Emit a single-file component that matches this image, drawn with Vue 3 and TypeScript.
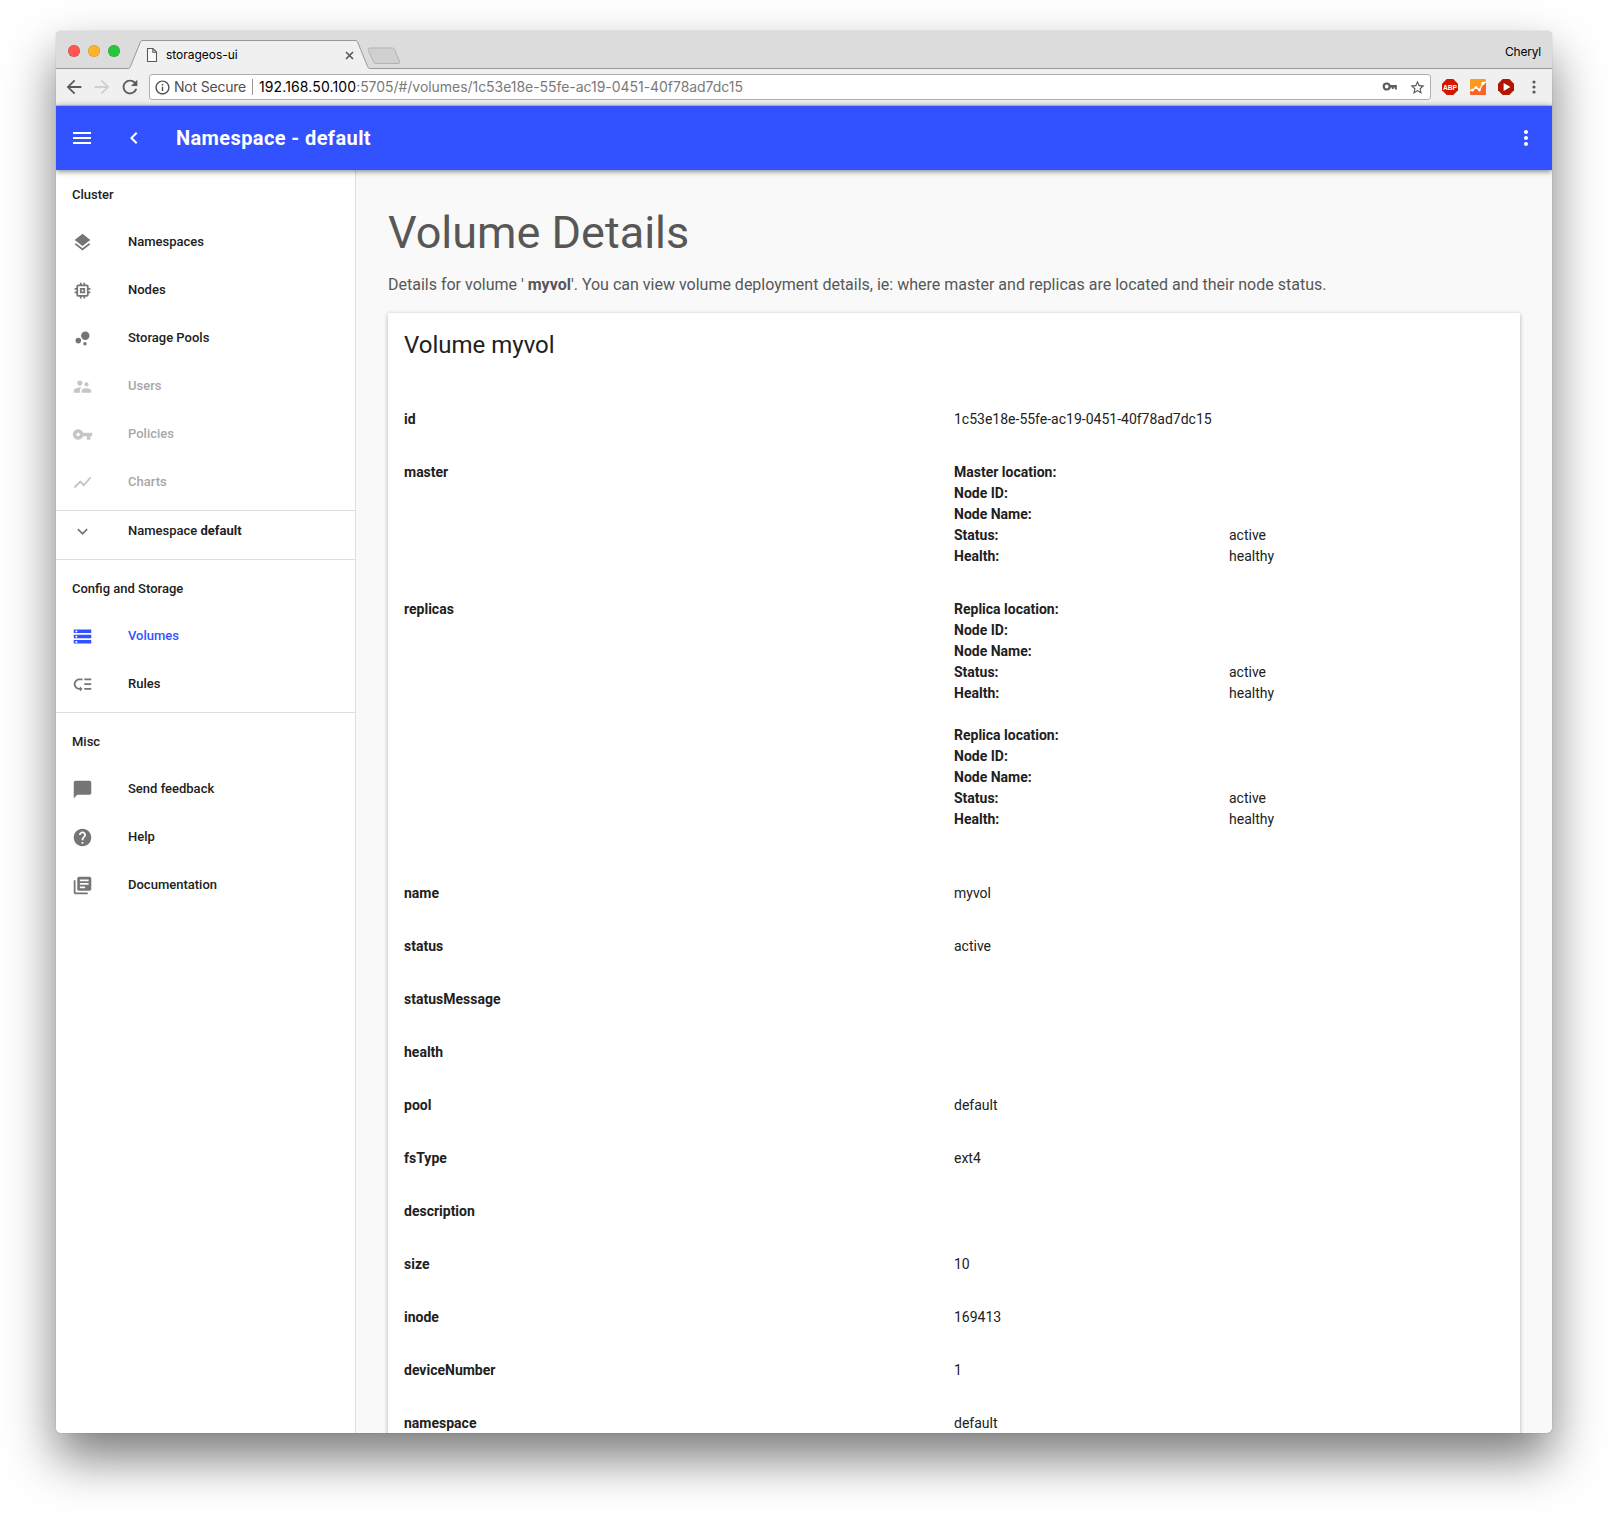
<script setup lang="ts">
interface NavItem {
  label: string
  icon: string
  disabled?: boolean
  active?: boolean
}

interface Placement {
  kind: string
  status: string
  health: string
}

interface Row {
  key: string
  value?: string
  placements?: Placement[]
  spaced?: boolean
}

const icons: Record<string, string> = {
  menu: 'M3 18h18v-2H3v2zm0-5h18v-2H3v2zm0-7v2h18V6H3z',
  back: 'M15.41 7.41L14 6l-6 6 6 6 1.41-1.41L10.83 12z',
  more: 'M12 8c1.1 0 2-.9 2-2s-.9-2-2-2-2 .9-2 2 .9 2 2 2zm0 2c-1.1 0-2 .9-2 2s.9 2 2 2 2-.9 2-2-.9-2-2-2zm0 6c-1.1 0-2 .9-2 2s.9 2 2 2 2-.9 2-2-.9-2-2-2z',
  layers: 'M11.99 18.54l-7.37-5.73L3 14.07l9 7 9-7-1.63-1.27-7.38 5.74zM12 16l7.36-5.73L21 9l-9-7-9 7 1.63 1.27L12 16z',
  memory: 'M15 9H9v6h6V9zm-2 4h-2v-2h2v2zm8-2V9h-2V7c0-1.1-.9-2-2-2h-2V3h-2v2h-2V3H9v2H7c-1.1 0-2 .9-2 2v2H3v2h2v2H3v2h2v2c0 1.1.9 2 2 2h2v2h2v-2h2v2h2v-2h2c1.1 0 2-.9 2-2v-2h2v-2h-2v-2h2zm-4 6H7V7h10v10z',
  bubbles: 'M4 14.4a3.2 3.2 0 1 0 6.4 0a3.2 3.2 0 1 0-6.4 0zM12.8 18a2 2 0 1 0 4 0a2 2 0 1 0-4 0zM10.4 8.8a4.8 4.8 0 1 0 9.6 0a4.8 4.8 0 1 0-9.6 0z',
  users: 'M16.5 12c1.38 0 2.49-1.12 2.49-2.5S17.88 7 16.5 7C15.12 7 14 8.12 14 9.5s1.12 2.5 2.5 2.5zM9 11c1.66 0 2.99-1.34 2.99-3S10.66 5 9 5C7.34 5 6 6.34 6 8s1.34 3 3 3zm7.5 3c-1.83 0-5.5.92-5.5 2.75V19h11v-2.25c0-1.83-3.67-2.75-5.5-2.75zM9 13c-2.33 0-7 1.17-7 3.5V19h7v-2.25c0-.85.33-2.34 2.37-3.47C10.5 13.1 9.66 13 9 13z',
  key: 'M12.65 10C11.83 7.67 9.61 6 7 6c-3.31 0-6 2.69-6 6s2.69 6 6 6c2.61 0 4.83-1.67 5.65-4H17v4h4v-4h2v-4H12.65zM7 14c-1.1 0-2-.9-2-2s.9-2 2-2 2 .9 2 2-.9 2-2 2z',
  chart: 'M3.5 18.49l6-6.01 4 4L22 6.92l-1.41-1.41-7.09 7.97-4-4L2 16.99z',
  expand: 'M16.59 8.59L12 13.17 7.41 8.59 6 10l6 6 6-6z',
  storage: 'M2 20h20v-4H2v4zm2-3h2v2H4v-2zM2 4v4h20V4H2zm4 3H4V5h2v2zm-4 7h20v-4H2v4zm2-3h2v2H4v-2z',
  rules: 'M14 5h8v2h-8zm0 5.5h8v2h-8zm0 5.5h8v2h-8zM2 11.5C2 15.08 4.92 18 8.5 18H9v2l3-3-3-3v2h-.5C6.02 16 4 13.98 4 11.5S6.02 7 8.5 7H12V5H8.5C4.92 5 2 7.92 2 11.5z',
  chat: 'M20 2H4c-1.1 0-2 .9-2 2v18l4-4h14c1.1 0 2-.9 2-2V4c0-1.1-.9-2-2-2z',
  help: 'M12 2C6.48 2 2 6.48 2 12s4.48 10 10 10 10-4.48 10-10S17.52 2 12 2zm1 17h-2v-2h2v2zm2.07-7.75l-.9.92C13.45 12.9 13 13.5 13 15h-2v-.5c0-1.1.45-2.1 1.17-2.83l1.24-1.26c.37-.36.59-.86.59-1.41 0-1.1-.9-2-2-2s-2 .9-2 2H8c0-2.21 1.79-4 4-4s4 1.79 4 4c0 .88-.36 1.68-.93 2.25z',
  books: 'M4 6H2v14c0 1.1.9 2 2 2h14v-2H4V6zm16-4H8c-1.1 0-2 .9-2 2v12c0 1.1.9 2 2 2h12c1.1 0 2-.9 2-2V4c0-1.1-.9-2-2-2zm-1 9H9V9h10v2zm-4 4H9v-2h6v2zm4-8H9V5h10v2z',
  arrowBack: 'M20 11H7.83l5.59-5.59L12 4l-8 8 8 8 1.41-1.41L7.83 13H20v-2z',
  arrowForward: 'M12 4l-1.41 1.41L16.17 11H4v2h12.17l-5.58 5.59L12 20l8-8z',
  reload: 'M17.65 6.35C16.2 4.9 14.21 4 12 4c-4.42 0-7.99 3.58-7.99 8s3.57 8 7.99 8c3.73 0 6.84-2.55 7.73-6h-2.08c-.82 2.33-3.04 4-5.65 4-3.31 0-6-2.69-6-6s2.69-6 6-6c1.66 0 3.14.69 4.22 1.78L13 11h7V4l-2.35 2.35z',
  info: 'M11 17h2v-6h-2v6zm1-15C6.48 2 2 6.48 2 12s4.48 10 10 10 10-4.48 10-10S17.52 2 12 2zm0 18c-4.41 0-8-3.59-8-8s3.59-8 8-8 8 3.59 8 8-3.59 8-8 8zM11 9h2V7h-2v2z',
  star: 'M22 9.24l-7.19-.62L12 2 9.19 8.63 2 9.24l5.46 4.73L5.82 21 12 17.27 18.18 21l-1.63-7.03L22 9.24zM12 15.4l-3.76 2.27 1-4.28-3.32-2.88 4.38-.38L12 6.1l1.71 4.04 4.38.38-3.32 2.88 1 4.28L12 15.4z',
}

const clusterItems: NavItem[] = [
  { label: 'Namespaces', icon: 'layers' },
  { label: 'Nodes', icon: 'memory' },
  { label: 'Storage Pools', icon: 'bubbles' },
  { label: 'Users', icon: 'users', disabled: true },
  { label: 'Policies', icon: 'key', disabled: true },
  { label: 'Charts', icon: 'chart', disabled: true },
]

const configItems: NavItem[] = [
  { label: 'Volumes', icon: 'storage', active: true },
  { label: 'Rules', icon: 'rules' },
]

const miscItems: NavItem[] = [
  { label: 'Send feedback', icon: 'chat' },
  { label: 'Help', icon: 'help' },
  { label: 'Documentation', icon: 'books' },
]

const sections = [
  { title: 'Cluster', items: clusterItems, namespace: true },
  { title: 'Config and Storage', items: configItems, namespace: false },
  { title: 'Misc', items: miscItems, namespace: false },
]

const volumeName = 'myvol'
const volumeId = '1c53e18e-55fe-ac19-0451-40f78ad7dc15'

const rows: Row[] = [
  { key: 'id', value: volumeId },
  { key: 'master', placements: [{ kind: 'Master', status: 'active', health: 'healthy' }] },
  {
    key: 'replicas',
    spaced: true,
    placements: [
      { kind: 'Replica', status: 'active', health: 'healthy' },
      { kind: 'Replica', status: 'active', health: 'healthy' },
    ],
  },
  { key: 'name', value: volumeName },
  { key: 'status', value: 'active' },
  { key: 'statusMessage' },
  { key: 'health' },
  { key: 'pool', value: 'default' },
  { key: 'fsType', value: 'ext4' },
  { key: 'description' },
  { key: 'size', value: '10' },
  { key: 'inode', value: '169413' },
  { key: 'deviceNumber', value: '1' },
  { key: 'namespace', value: 'default' },
]
</script>

<template>
  <div class="desktop">
    <div class="window">
      <div class="tabstrip">
        <div class="lights"><i class="red" /><i class="amber" /><i class="green" /></div>
        <div class="tab">
          <svg class="tab-shape" width="244" height="30" viewBox="0 0 244 30">
            <path d="M0 28.5H1.5C2.6 28.5 3 27.5 3.5 26.3L13 3C13.6 1.2 14.4.5 16 .5H228C229.6.5 230.4 1.2 231 3L240.5 26.3C241 27.5 241.6 28.5 242.7 28.5H244V30H0Z" fill="#f0f0f0" />
            <path d="M0 28.5H1.5C2.6 28.5 3 27.5 3.5 26.3L13 3C13.6 1.2 14.4.5 16 .5H228C229.6.5 230.4 1.2 231 3L240.5 26.3C241 27.5 241.6 28.5 242.7 28.5H244" fill="none" stroke="#989898" />
          </svg>
          <svg class="page-icon" width="12" height="16" viewBox="0 0 12 16">
            <path d="M1.5 1.5H7L10.5 5V14.5H1.5ZM6.8 1.5V5.2H10.5" fill="#fafafa" stroke="#5a5a5a" stroke-width="1.1" />
          </svg>
          <span class="tab-title">storageos-ui</span>
          <svg class="close" width="9" height="9" viewBox="0 0 9 9"><path d="M1 1L8 8M8 1L1 8" stroke="#5a5a5a" stroke-width="1.7" /></svg>
        </div>
        <svg class="new-tab" width="34" height="18" viewBox="0 0 34 18">
          <path d="M2.6 1H25.2Q27 1 27.6 2.4L32.6 14.6Q33.2 16.5 31.4 16.5H9Q7.2 16.5 6.6 15L1.2 3Q.6 1 2.6 1Z" fill="#d0d0d0" stroke="#b3b3b3" />
        </svg>
        <span class="profile">Cheryl</span>
      </div>

      <div class="toolbar">
        <svg class="tool" viewBox="0 0 24 24"><path :d="icons.arrowBack" /></svg>
        <svg class="tool faded" viewBox="0 0 24 24"><path :d="icons.arrowForward" /></svg>
        <svg class="tool" viewBox="0 0 24 24"><path :d="icons.reload" /></svg>
        <div class="omnibox">
          <svg class="info" viewBox="0 0 24 24"><path :d="icons.info" /></svg>
          <span class="insecure">Not Secure</span>
          <span class="bar" />
          <span class="host">192.168.50.100</span><span class="path">:5705/#/volumes/{{ volumeId }}</span>
          <svg class="pass" width="16" height="10" viewBox="0 0 16 10">
            <circle cx="4.7" cy="4.5" r="3" fill="none" stroke="#5a5a5a" stroke-width="2.2" />
            <path d="M7.5 3H14.8V7.5H12.8V5.6H11.6V7H9.8V5.6H7.5Z" fill="#5a5a5a" />
          </svg>
          <svg class="fav" viewBox="0 0 24 24"><path :d="icons.star" /></svg>
        </div>
        <div class="extensions">
          <svg width="16" height="16" viewBox="0 0 16 16">
            <path d="M4.7 0H11.3L16 4.7V11.3L11.3 16H4.7L0 11.3V4.7Z" fill="#d01800" />
            <text x="8" y="10.8" text-anchor="middle" textLength="14" lengthAdjust="spacingAndGlyphs" class="abp">ABP</text>
          </svg>
          <svg width="16" height="16" viewBox="0 0 16 16">
            <rect width="16" height="16" rx="1.2" fill="#fb9a1f" />
            <path d="M0 11.5L3.5 11L6.5 9L9.5 10.5L13 4L16 2.5V14.8Q16 16 14.8 16H1.2Q0 16 0 14.8Z" fill="#f9642a" />
            <path d="M0 11.5L2.6 11.2L6 8.6L9.4 11L13 4.4L16 2.8" fill="none" stroke="#fff" stroke-width="1.3" />
            <g fill="#fff"><circle cx="2.4" cy="11.2" r="1.4" /><circle cx="6" cy="8.6" r="1.4" /><circle cx="9.4" cy="11" r="1.4" /><circle cx="13" cy="4.4" r="1.7" /></g>
          </svg>
          <svg width="16" height="16" viewBox="0 0 16 16">
            <path d="M4.7 0H11.3L16 4.7V11.3L11.3 16H4.7L0 11.3V4.7Z" fill="#b21500" />
            <path d="M5.6 4V12L12.4 8Z" fill="#fff" />
          </svg>
        </div>
        <svg class="dots" width="4" height="14" viewBox="0 0 4 14" fill="#5a5a5a">
          <circle cx="2" cy="2" r="1.6" /><circle cx="2" cy="7" r="1.6" /><circle cx="2" cy="12" r="1.6" />
        </svg>
      </div>

      <header class="appbar">
        <svg class="menu" viewBox="0 0 24 24"><path :d="icons.menu" /></svg>
        <svg class="back" viewBox="0 0 24 24"><path :d="icons.back" /></svg>
        <h2>Namespace - default</h2>
        <svg class="more" viewBox="0 0 24 24"><path :d="icons.more" /></svg>
      </header>

      <div class="body">
        <nav class="sidebar">
          <section v-for="s in sections" :key="s.title">
            <h3>{{ s.title }}</h3>
            <div v-for="item in s.items" :key="item.label" class="item" :class="{ disabled: item.disabled, active: item.active }">
              <svg viewBox="0 0 24 24"><path :d="icons[item.icon]" /></svg>
              <span>{{ item.label }}</span>
            </div>
            <div v-if="s.namespace" class="item namespace">
              <svg viewBox="0 0 24 24"><path :d="icons.expand" /></svg>
              <span>Namespace <b>default</b></span>
            </div>
          </section>
        </nav>

        <main>
          <h1>Volume Details</h1>
          <p class="lead">Details for volume ' <b>{{ volumeName }}</b>'. You can view volume deployment details, ie: where master and replicas are located and their node status.</p>
          <div class="card">
            <h4>Volume {{ volumeName }}</h4>
            <div v-for="row in rows" :key="row.key" class="row">
              <b class="key">{{ row.key }}</b>
              <div class="value">
                <template v-if="row.placements">
                  <div v-for="(p, i) in row.placements" :key="i" class="placement" :class="{ spaced: row.spaced }">
                    <b>{{ p.kind }} location:</b><span />
                    <b>Node ID:</b><span />
                    <b>Node Name:</b><span />
                    <b>Status:</b><span>{{ p.status }}</span>
                    <b>Health:</b><span>{{ p.health }}</span>
                  </div>
                </template>
                <template v-else>{{ row.value }}</template>
              </div>
            </div>
          </div>
        </main>
      </div>
    </div>
  </div>
</template>

<style>
body {
  margin: 0;
  background: #fff;
}
</style>

<style scoped>
* {
  box-sizing: border-box;
}
.desktop {
  height: 1513px;
  padding: 31px 56px 80px;
  overflow: hidden;
  font-family: Roboto, sans-serif;
  color: #212121;
}
.window {
  width: 1496px;
  height: 1402px;
  display: flex;
  flex-direction: column;
  overflow: hidden;
  border-radius: 5px;
  background: #f9f9f9;
  box-shadow: 0 0 1px rgba(0, 0, 0, 0.45), 0 25px 50px rgba(0, 0, 0, 0.52);
}

/* browser chrome */
.tabstrip {
  flex: none;
  height: 38px;
  display: flex;
  align-items: flex-start;
  background: #dcdcdc;
  border-bottom: 1px solid #989898;
  font-family: Inter, sans-serif;
  font-size: 12px;
  color: #000;
}
.lights {
  display: flex;
  gap: 8px;
  padding: 14px 0 0 12px;
  width: 71px;
}
.lights i {
  width: 12px;
  height: 12px;
  border-radius: 50%;
  box-shadow: inset 0 0 0 0.5px rgba(0, 0, 0, 0.18);
}
.red { background: #fe5650; }
.amber { background: #feb42a; }
.green { background: #29c63c; }
.tab {
  position: relative;
  flex: none;
  width: 244px;
  height: 30px;
  margin-top: 9px;
  display: flex;
  align-items: center;
}
.tab-shape {
  position: absolute;
  left: 0;
  top: 0;
}
.page-icon {
  position: relative;
  margin-left: 19px;
}
.tab-title {
  position: relative;
  flex: 1;
  margin-left: 8px;
  line-height: 16px;
  letter-spacing: -0.03px;
}
.close {
  position: relative;
  margin-right: 17px;
}
.new-tab {
  margin: 16px 0 0 -4px;
}
.profile {
  margin: 13px 11px 0 auto;
  line-height: 16px;
  letter-spacing: -0.2px;
}
.toolbar {
  flex: none;
  height: 37px;
  display: flex;
  align-items: center;
  padding-left: 7px;
  background: #f0f0f0;
  border-bottom: 1px solid #d3d3d8;
}
.tool {
  width: 22px;
  height: 22px;
  margin-right: 6px;
  fill: #5a5a5a;
}
.tool.faded {
  fill: #cfcfcf;
}
.omnibox {
  width: 1282px;
  height: 26px;
  margin-left: 2px;
  display: flex;
  align-items: center;
  border: 1px solid #b0b0b0;
  border-radius: 3px;
  background: #fff;
  font: 14px/20px Inter, sans-serif;
}
.info {
  width: 17px;
  height: 17px;
  margin-left: 4px;
  fill: #505050;
}
.insecure {
  width: 77px;
  margin-left: 3px;
  letter-spacing: -0.2px;
  color: #505050;
  white-space: nowrap;
}
.bar {
  width: 1px;
  height: 16px;
  margin: 0 6px 0 1px;
  background: #999;
}
.host {
  letter-spacing: 0.12px;
  color: #000;
}
.path {
  color: #7a7a7a;
  letter-spacing: -0.045px;
}
.pass {
  margin-left: auto;
}
.fav {
  width: 17px;
  height: 17px;
  margin: 0 4px 0 11px;
  fill: #5a5a5a;
}
.extensions {
  display: flex;
  gap: 12px;
  margin-left: 11px;
}
.abp {
  font: 700 8px "Liberation Sans", sans-serif;
  fill: #fff;
}
.dots {
  margin-left: 18px;
}

/* application */
.appbar {
  position: relative;
  z-index: 1;
  flex: none;
  height: 64px;
  display: flex;
  align-items: center;
  padding: 0 14px;
  background: #3352ff;
  box-shadow: 0 1px 6px rgba(0, 0, 0, 0.55);
  color: #fff;
}
.appbar svg {
  width: 24px;
  height: 24px;
  fill: currentColor;
}
.appbar .back {
  margin-left: 28px;
}
.appbar h2 {
  flex: 1;
  margin: 0 0 0 30px;
  font-size: 20px;
  line-height: 28px;
  font-weight: 700;
  letter-spacing: 0.4px;
}
.body {
  flex: 1;
  min-height: 0;
  display: flex;
}
.sidebar {
  width: 300px;
  flex: none;
  background: #fff;
  border-right: 1px solid #dedede;
  font-size: 13px;
  font-weight: 500;
}
section + section {
  padding-top: 4px;
  border-top: 1px solid #dedede;
}
section {
  padding-bottom: 4px;
}
section:first-child {
  padding-bottom: 0;
}
h3 {
  height: 48px;
  margin: 0;
  padding: 2px 16px 0;
  font-size: 13px;
  font-weight: 500;
  line-height: 46px;
}
.item {
  height: 48px;
  display: flex;
  align-items: center;
  padding-left: 16px;
}
.item svg {
  width: 21px;
  height: 21px;
  margin-right: 35px;
  fill: #757575;
}
.item span {
  padding-bottom: 2px;
}
.item.disabled {
  color: #a8a8a8;
}
.item.disabled svg {
  fill: #c6c6c6;
}
.item.active {
  color: #3352ff;
}
.item.active svg {
  fill: #3352ff;
}
.namespace {
  height: 49px;
  margin-top: 4px;
  padding-bottom: 8px;
  border-top: 1px solid #dedede;
}
main {
  flex: 1;
  padding: 39px 32px 0;
  overflow: hidden;
}
h1 {
  margin: 0;
  font-size: 45px;
  line-height: 48px;
  font-weight: 400;
  color: #575757;
}
.lead {
  margin: 16px 0;
  font-size: 16px;
  line-height: 24px;
  color: #575757;
  white-space: nowrap;
}
.card {
  padding: 16px 16px 200px;
  border-radius: 2px;
  background: #fff;
  box-shadow: 0 1px 4px rgba(0, 0, 0, 0.3);
  font-size: 14px;
  line-height: 21px;
}
h4 {
  margin: 0 0 32px;
  font-size: 24px;
  line-height: 32px;
  font-weight: 400;
}
.row {
  display: flex;
  padding: 16px 0;
}
.key,
.value {
  width: 50%;
  min-height: 21px;
}
.placement {
  display: grid;
  grid-template-columns: 1fr 1fr;
  grid-auto-rows: 21px;
}
.placement.spaced {
  padding-bottom: 21px;
}
</style>
